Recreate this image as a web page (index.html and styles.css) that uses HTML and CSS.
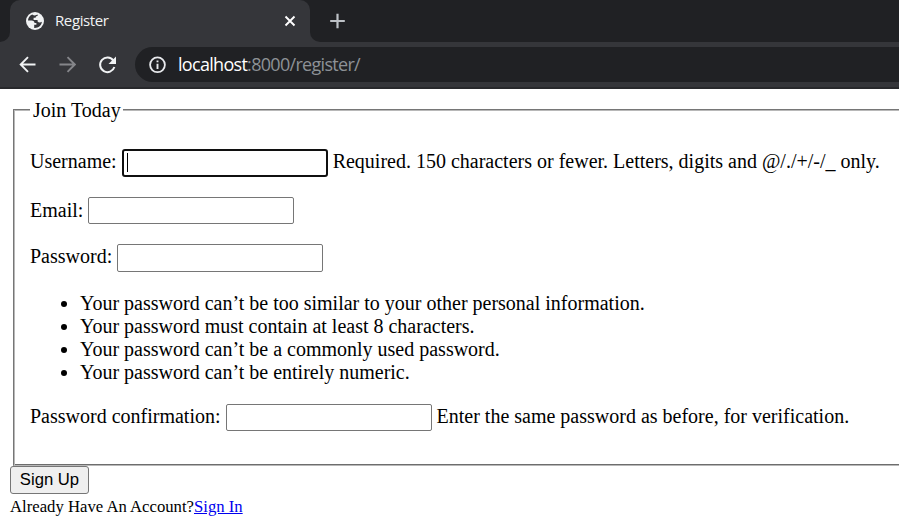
FILE: index.html
```html
<!DOCTYPE html>
<html lang="en">
<head>
<meta charset="utf-8">
<title>Register</title>
<link rel="stylesheet" href="styles.css">
</head>
<body>
<header class="browser">
  <div class="tabs">
    <div class="tab-edge"><i></i></div>
    <div class="tab">
      <svg class="globe" width="18" height="18" viewBox="0 0 18 18"><circle cx="9" cy="9" r="9" fill="#f1f3f4"/><path d="M6.2 2.6C3.6 3.8 2 6 2 8.6H5.5C7.6 8.6 8.5 9.6 8.5 11H10.4V12.8H8.2V15.9C12.2 16.2 15.6 13.4 15.9 9.7C14.8 10.8 12.6 10.8 11.6 9.6V8H7.6V5.8H9.6C9.6 4.4 10.4 3.9 11.6 3.9V2.6C10 3.6 8 3.8 6.2 2.6Z" fill="#35363a"/></svg>
      <span class="tab-title">Register</span>
      <svg class="close" width="12" height="12" viewBox="0 0 12 12"><path d="M1.5 1.5L10.5 10.5M10.5 1.5L1.5 10.5" stroke="#fff" stroke-width="1.9"/></svg>
    </div>
    <div class="tab-edge right"><i></i></div>
    <svg class="plus" width="16" height="16" viewBox="0 0 16 16"><path d="M7.5 .7V15.3M.2 8H14.8" stroke="#bdc1c6" stroke-width="2.2"/></svg>
  </div>
  <div class="toolbar">
    <svg class="nav" width="18" height="18" viewBox="0 0 18 18" fill="none" stroke="#f1f3f4" stroke-width="1.9"><path d="M17.5 8.5H3M10 1.2L2.7 8.5L10 15.8"/></svg>
    <svg class="nav" width="18" height="18" viewBox="0 0 18 18" fill="none" stroke="#85868a" stroke-width="1.9"><path d="M1.5 8.5H16.5M9.5 1.2L16.8 8.5L9.5 15.8"/></svg>
    <svg class="nav" width="18" height="18" viewBox="0 0 18 18"><path d="M15.4 4.6A7.3 7.3 0 1 0 16.4 11" fill="none" stroke="#f1f3f4" stroke-width="2"/><path d="M18 .5V8H10.5Z" fill="#f1f3f4"/></svg>
    <div class="address">
      <svg class="info" width="18" height="18" viewBox="0 0 18 18"><circle cx="9.5" cy="8.8" r="7.4" fill="none" stroke="#e8eaed" stroke-width="1.8"/><path d="M9.5 4.5V6.3M9.5 7.8V13.1" stroke="#e8eaed" stroke-width="1.9"/></svg>
      <span class="url"><b>localhost</b>:8000/register/</span>
    </div>
  </div>
</header>
<main class="page">
  <form>
    <section class="group">
      <h1 class="legend">Join Today</h1>
      <p class="row"><label>Username:</label><span class="field focused"><i></i></span><span>Required. 150 characters or fewer. Letters, digits and @/./+/-/_ only.</span></p>
      <p class="row email"><label>Email:</label><span class="field"></span></p>
      <p class="row"><label>Password:</label><span class="field"></span></p>
      <ul>
        <li>Your password can’t be too similar to your other personal information.</li>
        <li>Your password must contain at least 8 characters.</li>
        <li>Your password can’t be a commonly used password.</li>
        <li>Your password can’t be entirely numeric.</li>
      </ul>
      <p class="row confirm"><label>Password confirmation:</label><span class="field"></span><span>Enter the same password as before, for verification.</span></p>
    </section>
    <button type="button">Sign Up</button>
  </form>
  <div class="account">Already Have An Account?<a href="#">Sign In</a></div>
</main>
</body>
</html>
```
FILE: styles.css
```css
* { box-sizing: border-box; }
body {
  margin: 0;
  width: 899px;
  height: 526px;
  overflow: hidden;
  background: #fff;
  color: #000;
  font: 20px/23px "Liberation Serif", serif;
}
.browser {
  height: 89px;
  background: #35363a;
  border-bottom: 2px solid #28292c;
  font-family: "Noto Sans", sans-serif;
}
.tabs { display: flex; height: 42px; background: #202124; }
.tab-edge { width: 10px; background: #35363a; }
.tab-edge i { display: block; height: 42px; background: #202124; border-bottom-right-radius: 10px; }
.tab-edge.right i { border-radius: 0 0 0 10px; }
.tab {
  display: flex;
  align-items: center;
  width: 300px;
  padding: 0 14px 0 16px;
  background: #35363a;
  border-radius: 10px 10px 0 0;
}
.tab-title { margin: -2px 0 0 11px; color: #f1f3f4; font: 15px/20px "Open Sans", sans-serif; letter-spacing: -.4px; }
.close { margin-left: auto; }
.plus { margin: 13px 0 0 10px; }
.toolbar { display: flex; align-items: center; height: 45px; padding-left: 18px; }
.nav { margin-right: 22px; flex: none; }
.address {
  display: flex;
  align-items: center;
  flex: 1;
  height: 35px;
  margin-left: -3px;
  padding-left: 13px;
  background: #202124;
  border-radius: 18px 0 0 18px;
}
.url { margin: -1px 0 0 12px; color: #8d9196; font: 18px/26px "Open Sans", sans-serif; letter-spacing: -.7px; }
.url b { color: #fff; font-weight: 400; }
.page { padding: 10px 0 0 10px; }
.group {
  height: 357px;
  margin: 10px 0 0 3px;
  padding: 0 0 0 16px;
  border-style: solid;
  border-width: 1px 0 1px 1px;
  border-color: #767676 #767676 #b8b8b8;
  box-shadow: inset 1px 1px #b8b8b8, inset 0 -1px #6d6d6d;
}
.legend { width: 93px; height: 23px; margin: -11px 0 27.5px; padding-left: 3px; background: #fff; font: inherit; white-space: nowrap; }
.row { display: flex; align-items: center; gap: 5px; height: 27.5px; margin: 0 0 20px; white-space: nowrap; }
.row > :not(.field) { position: relative; top: -1.5px; }
.field { width: 206px; height: 27.5px; border: 1px solid #767676; border-radius: 2px; background: #fff; }
.row.email > label { top: -.5px; }
.row.confirm > :not(.field) { top: -1px; }
.row.email .field, .row.confirm .field { height: 27px; margin-bottom: .5px; }
.row.email + .row .field { height: 28px; }
.focused { border: 2px solid #101010; border-radius: 3px; height: 28px; padding: 2px 0 0 3px; }
.focused i { display: block; width: 1px; height: 19px; background: #000; }
ul { margin: 0 0 20px; padding-left: 50px; }
button { display: block; width: 79px; height: 28px; padding: 0; border: 1px solid #767676; border-radius: 3px; background: #efefef; color: #000; font: 16.67px/24px "Liberation Sans", sans-serif; }
.account { margin-top: 3px; font-size: 16.7px; line-height: 20px; }
.account a { color: #0000ee; }
```
